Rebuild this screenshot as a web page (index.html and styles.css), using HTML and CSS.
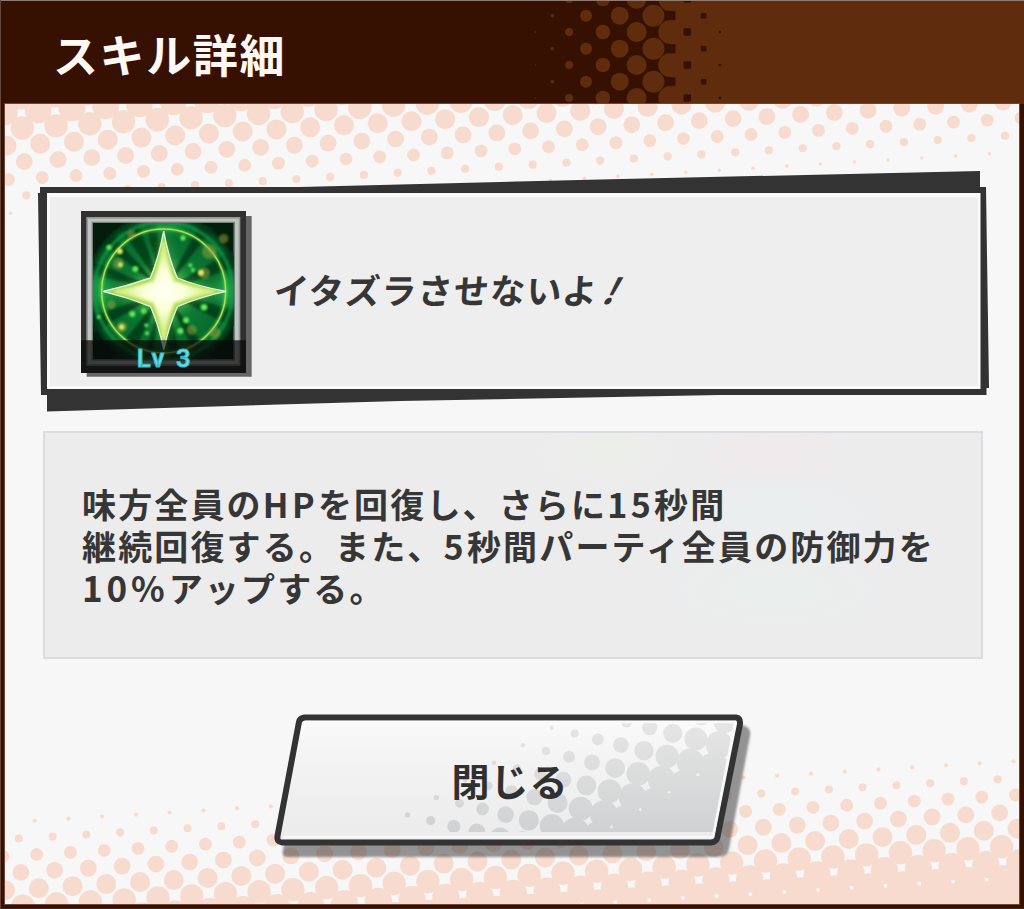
FILE: index.html
```html
<!DOCTYPE html>
<html lang="ja">
<head>
<meta charset="utf-8">
<title>スキル詳細</title>
<link rel="stylesheet" href="styles.css">
</head>
<body>
<div class="dialog">
  <header class="header">
    <svg class="header-dots" viewBox="0 0 1024 104" aria-hidden="true"><g id="headDots"></g><path fill="#8f7b71" d="M0 0H1024V1H0Z"/></svg>
    <h1 class="title">スキル詳細</h1>
  </header>
  <main class="content">
    <svg class="content-dots" viewBox="5 104 1014 800" aria-hidden="true"><g id="topDots" fill="#f6dbce"></g><g id="bottomDots" fill="#f6dbce"></g></svg>
    <section class="skill">
      <svg class="skill-frame" viewBox="36 168 956 246" aria-hidden="true">
        <path fill="#333" d="M40 187H300L600 179.500L980 171V187H986L989 388H986.500V395H720L400 401L47 411.500V395H41L38 193H40Z"/>
        <path fill="#fafafa" d="M47 193H980.500V389H47Z"/>
        <path fill="#eee" d="M50 197H978V386H50Z"/>
      </svg>
      <svg class="skill-icon" viewBox="33 34 513 498" role="img" aria-label="スキルアイコン">
        <defs>
          <radialGradient id="glow"><stop offset="0" stop-color="#56bd4b"/><stop offset=".45" stop-color="#0c7935"/><stop offset=".85" stop-color="#07662a"/><stop offset=".93" stop-color="#054d20"/><stop offset="1" stop-color="#02280f"/></radialGradient>
          <radialGradient id="star"><stop offset="0" stop-color="#fffff4"/><stop offset=".4" stop-color="#fbffd8"/><stop offset="1" stop-color="#c5ea76"/></radialGradient>
          <clipPath id="art"><path d="M69 70H491V479H69Z"/></clipPath>
          <filter id="soft" x="-50%" y="-50%" width="200%" height="200%"><feGaussianBlur stdDeviation="3"/></filter>
          <filter id="haze" x="-50%" y="-50%" width="200%" height="200%"><feGaussianBlur stdDeviation="16"/></filter>
        </defs>
        <path fill="#666" d="M50 49H545V531H50Z"/>
        <path fill="#303030" d="M33 34H528V520H33Z"/>
        <path fill="#929a96" d="M49 52H511V498H49Z"/>
        <path fill="#bdc5c0" d="M54 57H506V493H54Z"/>
        <path fill="#777f7a" d="M65 66H495V483H65Z"/>
        <g clip-path="url(#art)">
          <path fill="#021d0b" d="M69 70H491V479H69Z"/>
          <circle cx="281" cy="274" r="235" fill="url(#glow)"/>
          <g fill="#023719" opacity=".8" filter="url(#soft)">
            <path d="M281 274 65 185 80 230ZM281 274 155 90 205 75ZM281 274 390 75 430 85ZM281 274 491 150 491 205ZM281 274 491 330 491 385ZM281 274 430 479 385 479ZM281 274 300 479 335 479ZM281 274 180 479 120 479ZM281 274 69 400 69 350ZM281 274 95 130 130 110ZM281 274 225 70 260 70ZM281 274 220 479 245 479Z"/>
          </g>
          <g fill="#25c35b" opacity=".65" filter="url(#haze)"><path d="M55 230H120V315H55ZM445 230H510V315H445ZM230 60H335V95H230Z"/></g>
          <circle cx="281" cy="274" r="207" fill="none" stroke="#119744" stroke-width="12" opacity=".7" filter="url(#soft)"/>
          <circle cx="281" cy="274" r="186" fill="none" stroke="#63cf43" stroke-width="11" opacity=".6" filter="url(#soft)"/>
          <circle cx="281" cy="274" r="186" fill="none" stroke="#a8e05a" stroke-width="4.500"/>
          <g fill="#9ca642" opacity=".5" filter="url(#soft)"><circle cx="461" cy="117" r="14"/><circle cx="418" cy="156" r="22"/><circle cx="145" cy="192" r="17"/><circle cx="403" cy="220" r="17"/><circle cx="124" cy="315" r="13"/><circle cx="156" cy="382" r="16"/><circle cx="365" cy="391" r="15"/><circle cx="435" cy="400" r="17"/><circle cx="184" cy="105" r="13"/></g>
          <g fill="#62ec57" filter="url(#soft)"><circle cx="117" cy="143" r="8"/><circle cx="196" cy="208" r="9"/><circle cx="361" cy="197" r="6"/><circle cx="369" cy="211" r="6"/><circle cx="402" cy="323" r="10"/><circle cx="187" cy="343" r="9"/><circle cx="221" cy="334" r="8"/><circle cx="348" cy="362" r="9"/><circle cx="331" cy="394" r="9"/><circle cx="229" cy="377" r="6"/><circle cx="231" cy="401" r="6"/><circle cx="339" cy="115" r="8"/><circle cx="86" cy="352" r="6"/></g>
          <g fill="#e5ec63" filter="url(#soft)"><circle cx="149" cy="155" r="9"/><circle cx="393" cy="219" r="9"/><circle cx="151" cy="195" r="7"/><circle cx="155" cy="382" r="8"/></g>
          <path d="M281 92 320 236 470 275 320 320 281 452 244 320 97 275 244 236Z" fill="#8fe860" filter="url(#haze)" opacity=".4"/>
          <path d="M281 94Q297 180 322 235Q390 262 468 275Q390 292 323 320Q298 375 281 450Q266 375 241 320Q170 292 99 275Q170 260 241 235Q266 175 281 94Z" fill="#a3d957" stroke="#e9f7e4" stroke-width="4"/>
          <path d="M281 127Q293 200 313 244Q375 265 432 275Q375 287 313 311Q293 355 281 418Q270 355 250 311Q190 287 135 275Q190 265 250 244Q270 200 281 127Z" fill="url(#star)" stroke="#d7ef84" stroke-width="7" filter="url(#soft)"/>
        </g>
        <path fill="#080808" opacity=".72" d="M33 422H528V520H33Z"/>
        <path fill="#777" opacity=".45" d="M272 422H291L282 452Z"/>
        <text class="level" x="200" y="503" textLength="162">Lv 3</text>
      </svg>
      <h2 class="skill-name">イタズラさせないよ<span class="bang">!</span></h2>
    </section>
    <section class="description">
      <p class="copy">味方全員の<span class="latin">HP</span>を回復し、さらに<span class="latin">15</span>秒間<br>継続回復する。また、<span class="latin">5</span>秒間パーティ全員の防御力を<br><span class="latin percent">10%</span>アップする。</p>
    </section>
    <button class="close" type="button">
      <svg class="close-shape" viewBox="272 710 482 150" aria-hidden="true">
        <defs>
          <linearGradient id="face" x2="0" y2="1"><stop stop-color="#fbfbfb"/><stop offset=".35" stop-color="#f3f3f3"/><stop offset="1" stop-color="#ebebec"/></linearGradient>
          <linearGradient id="tone" x2="0" y2="1"><stop stop-color="#e6e6e6"/><stop offset="1" stop-color="#d0d1d2"/></linearGradient>
          <clipPath id="faceClip"><path d="M306 722H735L713 832H282Z"/></clipPath>
          <mask id="dotMask" maskUnits="userSpaceOnUse" x="272" y="710" width="482" height="150"><g id="buttonDots" fill="#fff"></g></mask>
          <filter id="shadowSoft"><feGaussianBlur stdDeviation="1"/></filter>
        </defs>
        <path d="M315 725H742Q752 727 750 736L729 849Q727 857 718 857H288Q281 857 283 849Z" fill="#383838" opacity=".52" filter="url(#shadowSoft)"/>
        <path d="M304.500 717.500H736Q740.500 718 740 724L717.500 837Q716.500 842 711 842.500H282Q276.500 842 277.500 836L299 722Q300 718 304.500 717.500Z" fill="url(#face)" stroke="#323332" stroke-width="6"/>
        <g clip-path="url(#faceClip)"><rect x="400" y="720" width="350" height="112" fill="url(#tone)" mask="url(#dotMask)"/></g>
        <path d="M305 722H735L713 837H283" fill="none" stroke="#fafafa" stroke-width="2.500" opacity=".85"/>
      </svg>
      <span class="close-label">閉じる</span>
    </button>
  </main>
</div>
<script src="dots.js"></script>
</body>
</html>
```
FILE: styles.css
```css
* { box-sizing: border-box; }

body {
  margin: 0;
  font-family: "Noto Sans CJK JP", sans-serif;
  color: #363636;
}

.dialog {
  width: 1024px;
  height: 909px;
  display: flex;
  flex-direction: column;
  overflow: hidden;
  background: #361101;
  border-left: 1px solid #65483b;
  border-bottom: 1px solid #4a2414;
}

.header {
  position: relative;
  flex: 0 0 104px;
  margin-left: -1px;
  display: flex;
  align-items: center;
  padding-left: 53px;
}

.header-dots {
  position: absolute;
  left: 0;
  top: 0;
  width: 1024px;
  height: 104px;
}

.title {
  position: relative;
  margin: 0;
  padding-top: 3px;
  font-size: 45px;
  line-height: 64px;
  font-weight: 700;
  letter-spacing: 1.6px;
  color: #fff8f5;
}

.content {
  position: relative;
  flex: 0 0 800px;
  width: 1014px;
  margin-left: 4px;
  padding: 83px 0 0 35px;
  background: #f7f7f7;
  box-shadow: 0 0 0 1px #6f473a;
}

.content-dots {
  position: absolute;
  inset: 0;
  width: 1014px;
  height: 800px;
}

.skill {
  position: relative;
  width: 946px;
  height: 208px;
  padding: 24px 0 0 41px;
  display: flex;
  align-items: flex-start;
  gap: 22px;
}

.skill-frame {
  position: absolute;
  left: -4px;
  top: -19px;
  width: 956px;
  height: 246px;
}

.skill-icon {
  position: relative;
  flex: none;
  width: 171px;
  height: 166px;
}

.level {
  font: 600 77px Roboto, sans-serif;
  fill: #62dfe9;
  stroke: #39b9c6;
  stroke-width: 3px;
}

.skill-name {
  position: relative;
  margin: 53px 0 0;
  font-size: 35px;
  line-height: 50px;
  font-weight: 700;
  letter-spacing: 1.3px;
  white-space: nowrap;
  transform: skewX(-4deg);
}

.bang {
  display: inline-block;
  margin-left: 9px;
  transform: skewX(-25deg);
}

.description {
  position: relative;
  width: 940px;
  height: 228px;
  margin: 36px 0 0 3px;
  padding: 50px 0 0 37px;
  border: 2px solid #dcdde0;
  background:
    radial-gradient(ellipse 80px 35px at 60% 10%, #ecefea, transparent),
    radial-gradient(ellipse 80px 35px at 78% 9%, #f0eaec, transparent),
    radial-gradient(ellipse 110px 45px at 78% 38%, #eaeeef, transparent),
    radial-gradient(ellipse 110px 40px at 78% 70%, #eaefec, transparent),
    #ececed;
}

.copy {
  margin: 0;
  font-size: 34px;
  line-height: 42px;
  font-weight: 700;
  letter-spacing: 2.15px;
  white-space: nowrap;
}

.latin { letter-spacing: 3.4px; }

.percent {
  font-size: 35px;
  line-height: 1;
  letter-spacing: 3.9px;
}

.close {
  position: relative;
  display: flex;
  align-items: center;
  justify-content: center;
  width: 482px;
  height: 150px;
  margin: 51px 0 0 232px;
  padding: 0 6px 10px 0;
  border: 0;
  background: none;
  color: #303030;
  font: 700 38px/54px "Noto Sans CJK JP", sans-serif;
  letter-spacing: 1px;
}

.close-shape {
  position: absolute;
  inset: 0;
  width: 482px;
  height: 150px;
}

.close-label { position: relative; }
```
FILE: dots.js
```js
const NS = "http://www.w3.org/2000/svg";

function shape(parent, name, attrs) {
  const el = document.createElementNS(NS, name);
  for (const key in attrs) el.setAttribute(key, attrs[key]);
  parent.appendChild(el);
}

const head = document.getElementById("headDots");
const light = "#5f2d0d";
const dark = "#361101";
[0.8, 1.8, 4, 6, 7.3, 9, 10, 11, 12].forEach((r, i) => {
  for (let y = (i % 2 ? 15.7 : -1); y < 120; y += 33) {
    shape(head, "circle", { cx: 535.5 + i * 16.85, cy: y, r, fill: light });
  }
});
shape(head, "rect", { x: 671, y: 0, width: 353, height: 104, fill: light });
[9, 7.5, 5.5, 2.5].forEach((s, i) => {
  for (let y = (i % 2 ? 32 : 15.7) - 33; y < 120; y += 33) {
    shape(head, "rect", { x: 671 + i * 16.3 - s / 2, y: y - s / 2, width: s, height: s, rx: 1, fill: dark });
  }
});

// Rows alternate between the two offsets of a centred square lattice.
function rows(id, x, y, radii) {
  const group = document.getElementById(id);
  radii.forEach((r, i) => {
    for (let n = -2; n < 33; n++) {
      shape(group, "circle", { cx: x + n * 33.75, cy: y - n * 2.05, r });
    }
    x += i % 2 ? -15.85 : 17.9;
    y += i % 2 ? 17.9 : 15.85;
  });
}
rows("topDots", 20.3, 94.1, [15.4]);
rows("topDots", 4.4, 112, [13.4]);
rows("topDots", 22.3, 127.9, [11.7, 10, 8.4, 6.4, 4.1, 1.8]);
rows("bottomDots", 34.7, 820.7, [2.1]);
rows("bottomDots", 18.85, 838.6, [4, 6.4, 8.4, 10, 11.7, 13.6, 15.4, 17, 17, 17]);

const button = document.getElementById("buttonDots");
for (let i = -12; i < 12; i++) {
  for (let j = -6; j < 8; j++) {
    const dx = i * 23.1 - j * 5.7;
    const dy = i * 5.7 + j * 23.1;
    const r = Math.min(18, 6 + 0.117 * (dx * 0.49 + dy * 0.87));
    if (r > 1) shape(button, "circle", { cx: 569 + dx, cy: 756.7 + dy, r });
  }
}
```
